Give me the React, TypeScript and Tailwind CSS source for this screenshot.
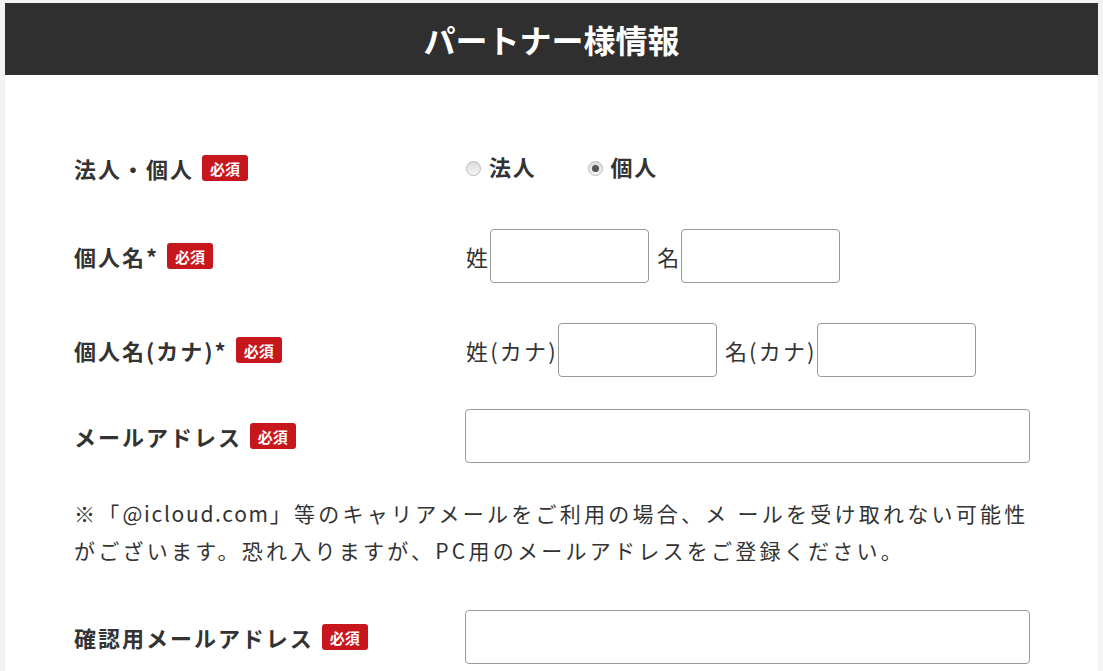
import { ReactNode } from 'react';

const jp = { fontFamily: '"Noto Sans CJK JP", "Noto Sans", sans-serif' };

function Badge() {
  return (
    <span className="ml-2 inline-flex h-[26px] w-[46px] items-center justify-center rounded-[3px] bg-[#c8161d] text-[15px] font-bold leading-none tracking-normal text-white">
      必須
    </span>
  );
}

function Row({ label, children, className = '' }: { label: string; children: ReactNode; className?: string }) {
  return (
    <div className={`flex min-h-[54px] items-center ${className}`}>
      <div className="flex w-[391px] shrink-0 items-center">
        <span className="text-[22px] font-bold tracking-[0.09em] text-[#333]">{label}</span>
        <Badge />
      </div>
      <div className="flex flex-1 items-center">{children}</div>
    </div>
  );
}

function Radio({ checked, label }: { checked?: boolean; label: string }) {
  return (
    <label className="flex items-center">
      <span className="flex h-[15px] w-[15px] items-center justify-center rounded-full border border-[#b9b9b9] bg-gradient-to-b from-[#dcdcdc] to-[#f4f4f4]">
        {checked && <span className="h-[7px] w-[7px] rounded-full bg-[#555]" />}
      </span>
      <span className="ml-2 -mt-[3px] text-[22px] font-bold tracking-[0.08em] text-[#333]">{label}</span>
    </label>
  );
}

function Field({ w = 'w-[159px]' }: { w?: string }) {
  return <input type="text" className={`h-[54px] ${w} rounded-[4px] border border-[#999] bg-white outline-none`} />;
}

function Hint({ text, first }: { text: string; first?: boolean }) {
  return <span className={`${first ? 'pl-px' : 'ml-2'} text-[22px] tracking-[0.1em] text-[#333]`}>{text}</span>;
}

export default function App() {
  return (
    <div className="min-h-screen bg-[#f3f3f3] px-[5px] pt-[3px]" style={jp}>
      <div className="bg-white">
        <div className="flex h-[72px] items-center justify-center bg-[#2f2f2f]">
          <h1 className="text-[32px] font-bold leading-none text-white">パートナー様情報</h1>
        </div>

        <div className="px-[69px] pb-10 pt-[66px]">
          <Row label="法人・個人">
            <div className="flex items-center gap-[51px] pl-px">
              <Radio label="法人" />
              <Radio label="個人" checked />
            </div>
          </Row>

          <Row label="個人名*" className="mt-[34px]">
            <Hint text="姓" first />
            <Field />
            <Hint text="名" />
            <Field />
          </Row>

          <Row label="個人名(カナ)*" className="mt-10">
            <Hint text="姓(カナ)" first />
            <Field />
            <Hint text="名(カナ)" />
            <Field />
          </Row>

          <Row label="メールアドレス" className="mt-8">
            <Field w="w-[565px]" />
          </Row>

          <p className="mt-8 whitespace-nowrap text-[21px] leading-[37px] tracking-[0.155em] text-[#333]">
            ※「<span className="tracking-[0.08em]">@icloud.com</span>」等のキャリアメールをご利用の場合、メ ールを受け取れない可能性
            <br />
            がございます。恐れ入りますが、PC用のメールアドレスをご登録ください。
          </p>

          <Row label="確認用メールアドレス" className="mt-[41px]">
            <Field w="w-[565px]" />
          </Row>
        </div>
      </div>
    </div>
  );
}
